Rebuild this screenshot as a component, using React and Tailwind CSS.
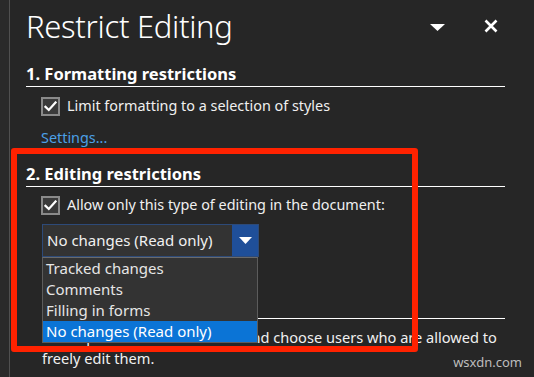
import { useState } from 'react';

function CheckRow({ label }) {
  return (
    <div className="flex items-center gap-[7px] pl-[15px]">
      <div className="w-[19px] h-[19px] border-2 border-[#8a8a8a] bg-[#3a3a3a] flex items-center justify-center">
        <svg width="13" height="11" viewBox="0 0 13 11">
          <path d="M1.5 5.8 L4.8 9 L11.5 1.5" fill="none" stroke="#fff" strokeWidth="2.2" strokeLinecap="square" />
        </svg>
      </div>
      <span className="text-[14.4px] text-[#f0f0f0] leading-[20px]">{label}</span>
    </div>
  );
}

export default function App() {
  const [value] = useState('No changes (Read only)');
  const options = ['Tracked changes', 'Comments', 'Filling in forms', 'No changes (Read only)'];

  return (
    <div
      className="relative w-[534px] h-[377px] overflow-hidden bg-[#262626] flex"
      style={{ fontFamily: '"Noto Sans", "Open Sans", sans-serif' }}
    >
      <div className="w-[10px] shrink-0 bg-[#2a2a2a] border-r border-[#505050]" />

      <div className="flex-1 pl-[16px] pr-[29px] text-white">
        <div className="flex items-center h-[52px]">
          <h1 className="text-[31px] font-light tracking-[-0.3px] text-white flex-1 leading-none">Restrict Editing</h1>
          <svg width="15" height="7" viewBox="0 0 15 7" className="mr-[39px] mt-[2px]">
            <path d="M0 0 H15 L7.5 7 Z" fill="#fff" />
          </svg>
          <svg width="14" height="14" viewBox="0 0 14 14" className="mr-[7px]">
            <path d="M1.5 1.5 L12.5 12.5 M12.5 1.5 L1.5 12.5" stroke="#fff" strokeWidth="2.6" />
          </svg>
        </div>

        <h2 className="mt-[11px] text-[16.5px] font-bold leading-[22px] pb-[1px] border-b border-white">
          1. Formatting restrictions
        </h2>
        <div className="mt-[9px]">
          <CheckRow label="Limit formatting to a selection of styles" />
        </div>
        <div className="mt-[12px] pl-[15px] text-[14.4px] text-[#4ca0e6] leading-[20px]">Settings...</div>

        <h2 className="mt-[15px] text-[16.5px] font-bold leading-[22px] pb-[1px] border-b border-white">
          2. Editing restrictions
        </h2>
        <div className="mt-[8px]">
          <CheckRow label="Allow only this type of editing in the document:" />
        </div>

        <div className="mt-[9px] ml-[16px] w-[217px] h-[33px] flex border border-[#2d4a78] bg-[#333333]">
          <span className="flex-1 pl-[4px] text-[15px] leading-[31px] text-[#f0f0f0]">{value}</span>
          <div className="w-[26px] bg-[#1f4f99] flex items-center justify-center">
            <svg width="13" height="7" viewBox="0 0 13 7">
              <path d="M0 0 H13 L6.5 7 Z" fill="#fff" />
            </svg>
          </div>
        </div>

        <div className="ml-[16px] border-b border-white mt-[61px]" />
        <p className="mt-[8px] pl-[16px] text-[14.6px] text-[#f0f0f0] leading-[21px]">
          Select parts of the document and choose users who are allowed to freely edit them.
        </p>
      </div>

      <div className="absolute left-[42px] top-[257px] w-[216px] bg-[#333333] border border-[#5c5c5c] border-t-[#6a6a6a]">
        {options.map((o) => (
          <div
            key={o}
            className={
              o === value
                ? 'h-[21px] pl-[3px] text-[15px] leading-[21px] bg-[#0b74d6] text-white'
                : 'h-[21px] pl-[3px] text-[15px] leading-[21px] text-[#e6e6e6]'
            }
          >
            {o}
          </div>
        ))}
      </div>

      <div className="absolute left-[11px] top-[148px] w-[407px] h-[204px] border-[6px] border-[#ff2200] rounded-[3px]" />

      <div className="absolute right-[12px] bottom-[5px] text-[13px] text-[#bdbdbd]">wsxdn.com</div>
    </div>
  );
}
